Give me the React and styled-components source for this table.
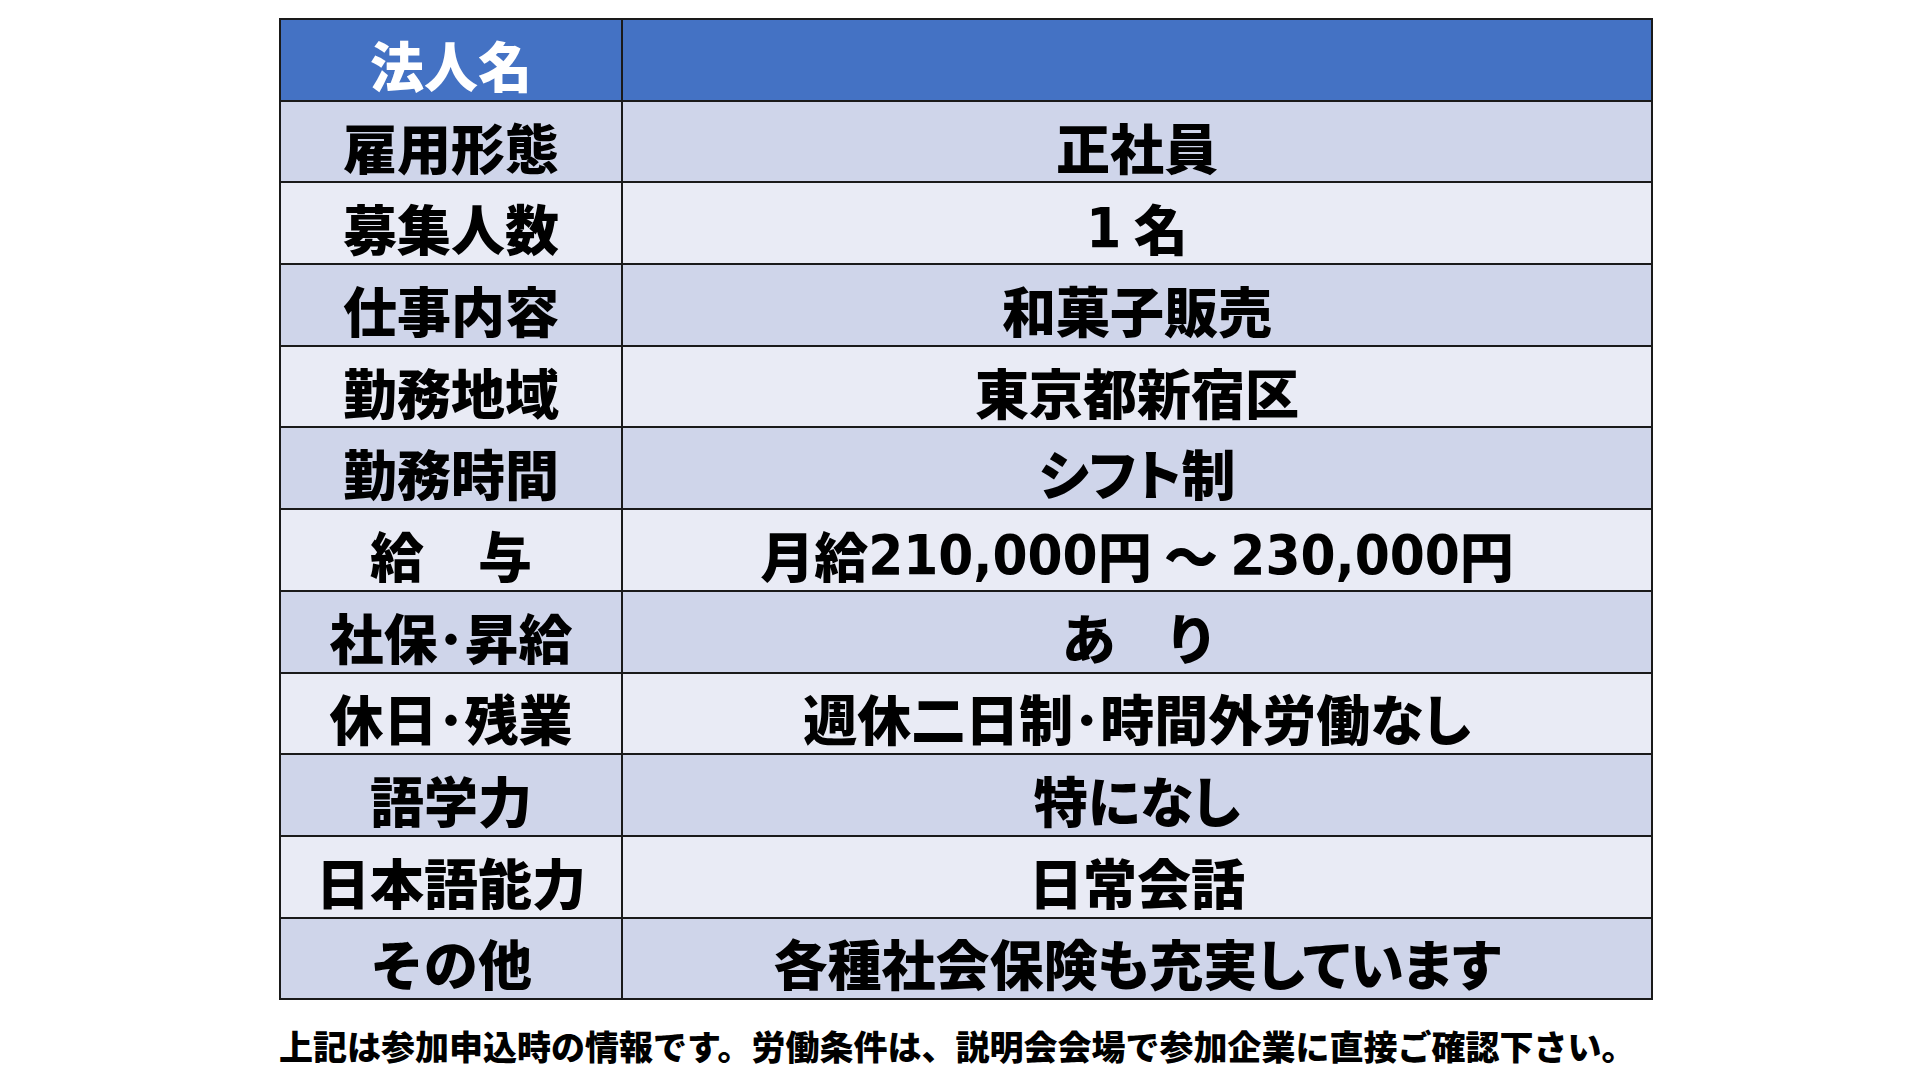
import React from 'react';
import styled, { createGlobalStyle } from 'styled-components';

const GlobalStyle = createGlobalStyle`
  html, body {
    margin: 0;
    padding: 0;
    background: #ffffff;
  }
  body {
    font-family: "Noto Sans CJK JP", "Liberation Sans", sans-serif;
  }
`;

const Page = styled.div`
  width: 1920px;
  height: 1080px;
  box-sizing: border-box;
  padding: 18px 0 0 279px;
  display: flex;
  flex-direction: column;
`;

const Sheet = styled.div`
  width: 1374px;
  display: grid;
  grid-template-rows: repeat(12, 81.7px);
  border-top: 2px solid #1a1a1a;
  border-left: 2px solid #1a1a1a;
  box-sizing: border-box;
`;

const Row = styled.div`
  display: grid;
  grid-template-columns: 342px 1fr;
  background: ${p => (p.$head ? '#4472c4' : p.$odd ? '#cfd5ea' : '#e9ebf5')};
`;

const Cell = styled.div`
  display: flex;
  align-items: center;
  justify-content: center;
  padding-top: 10px;
  box-sizing: border-box;
  border-right: 2px solid #1a1a1a;
  border-bottom: 2px solid #1a1a1a;
  font-family: "Noto Sans CJK JP", sans-serif;
  font-feature-settings: ${p => (p.$value ? '"palt" 1' : 'normal')};
  font-weight: 900;
  font-size: 54px;
  line-height: 1;
  color: ${p => (p.$head ? '#ffffff' : '#000000')};
  white-space: pre;
`;

const Num = styled.span`
  font-family: "Liberation Sans Narrow", "DejaVu Sans Condensed", "Liberation Sans", sans-serif;
  font-weight: 700;
  font-size: 56px;
`;

const Note = styled.div`
  margin-top: 26px;
  font-family: "Noto Sans CJK JP", sans-serif;
  font-weight: 900;
  font-size: 34px;
  line-height: 1.2;
  color: #000;
  white-space: nowrap;
`;

const rows = [
  ['雇用形態', '正社員'],
  ['募集人数', <><Num>1</Num> 名</>],
  ['仕事内容', '和菓子販売'],
  ['勤務地域', '東京都新宿区'],
  ['勤務時間', 'シフト制'],
  ['給　与', <>月給<Num>210,000</Num>円 ～ <Num>230,000</Num>円</>],
  ['社保･昇給', 'あ　り'],
  ['休日･残業', '週休二日制･時間外労働なし'],
  ['語学力', '特になし'],
  ['日本語能力', '日常会話'],
  ['その他', '各種社会保険も充実しています'],
];

export default function App() {
  return (
    <>
      <GlobalStyle />
      <Page>
        <Sheet>
          <Row $head>
            <Cell $head>法人名</Cell>
            <Cell $head />
          </Row>
          {rows.map(([label, value], i) => (
            <Row key={label} $odd={i % 2 === 0}>
              <Cell>{label}</Cell>
              <Cell $value>{value}</Cell>
            </Row>
          ))}
        </Sheet>
        <Note>上記は参加申込時の情報です。労働条件は、説明会会場で参加企業に直接ご確認下さい。</Note>
      </Page>
    </>
  );
}
